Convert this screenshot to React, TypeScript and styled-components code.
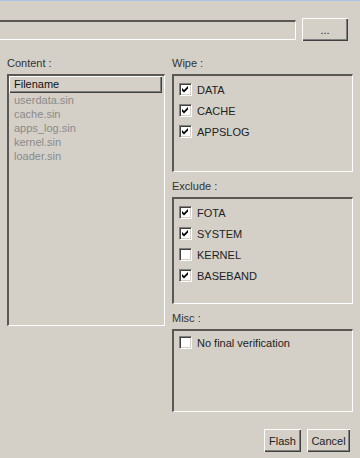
import React from "react";
import styled, { createGlobalStyle } from "styled-components";

const Global = createGlobalStyle`
  html, body { margin: 0; padding: 0; background: #d4d0c8; }
  body { font-family: "Liberation Sans", Arial, sans-serif; font-size: 11px; color: #222; }
`;

const Window = styled.div`
  width: 360px;
  height: 458px;
  background: #d4d0c8;
  border-top: 1px solid #a9c6ea;
  box-sizing: border-box;
  display: flex;
  flex-direction: column;
  position: relative;
  overflow: hidden;
`;

const TopRow = styled.div`
  display: flex;
  align-items: center;
  padding: 17px 12px 0 0;
  gap: 6px;
`;

const Field = styled.div`
  flex: 1;
  height: 20px;
  background: #d4d0c8;
  border-top: 2px solid #5a5855;
  border-bottom: 1px solid #fff;
  border-right: 1px solid #fff;
  box-sizing: border-box;
`;

const Button = styled.button<{ $w: number; $h: number }>`
  width: ${(p) => p.$w}px;
  height: ${(p) => p.$h}px;
  padding: 0;
  margin: 0;
  background: #d4d0c8;
  font-family: "Liberation Sans", Arial, sans-serif;
  font-size: 11px;
  color: #222;
  border: none;
  box-shadow: inset 1px 1px 0 #fff, inset -1px -1px 0 #404040, inset -2px -2px 0 #808080;
  display: flex;
  align-items: center;
  justify-content: center;
`;

const Main = styled.div`
  display: grid;
  grid-template-columns: 158px 181px;
  column-gap: 7px;
  padding: 16px 0 0 7px;
`;

const Column = styled.div`
  display: flex;
  flex-direction: column;
`;

const Label = styled.div<{ $top?: number }>`
  height: 12px;
  line-height: 12px;
  margin-top: ${(p) => p.$top ?? 0}px;
  margin-bottom: 5px;
  color: #333;
`;

const Sunken = styled.div<{ $h: number }>`
  height: ${(p) => p.$h}px;
  box-sizing: border-box;
  border-top: 2px solid #5a5855;
  border-left: 2px solid #5a5855;
  border-right: 1px solid #fff;
  border-bottom: 1px solid #fff;
  display: flex;
  flex-direction: column;
`;

const Header = styled.div`
  height: 17px;
  line-height: 17px;
  padding-left: 5px;
  color: #111;
  margin-right: 2px;
  box-shadow: inset 1px 1px 0 #fff, inset -1px -1px 0 #404040, inset -2px -2px 0 #808080;
`;

const Item = styled.div`
  height: 14px;
  line-height: 14px;
  padding-left: 5px;
  color: #8a8a8a;
`;

const Checks = styled.div<{ $pad?: number }>`
  display: flex;
  flex-direction: column;
  padding: ${(p) => p.$pad ?? 3}px 0 0 5px;
`;

const Row = styled.div`
  height: 21px;
  display: flex;
  align-items: center;
  gap: 5px;
  color: #222;
`;

const Box = styled.span`
  width: 13px;
  height: 13px;
  box-sizing: border-box;
  background: #fff;
  border-top: 1px solid #808080;
  border-left: 1px solid #808080;
  border-right: 1px solid #fff;
  border-bottom: 1px solid #fff;
  box-shadow: inset 1px 1px 0 #404040, inset -1px -1px 0 #d4d0c8;
  display: flex;
  align-items: center;
  justify-content: center;
`;

const Check = ({ on, label }: { on: boolean; label: string }) => (
  <Row>
    <Box>
      {on && (
        <svg width="7" height="7" viewBox="0 0 7 7">
          <path d="M0 2 L2 4 L6 0 L6 2.5 L2 6.5 L0 4.5 Z" fill="#000" />
        </svg>
      )}
    </Box>
    <span>{label}</span>
  </Row>
);

const Footer = styled.div`
  display: flex;
  justify-content: flex-end;
  gap: 6px;
  padding: 17px 10px 0 0;
`;

export default function App() {
  return (
    <Window>
      <Global />
      <TopRow>
        <Field />
        <Button $w={46} $h={23}>...</Button>
      </TopRow>
      <Main>
        <Column>
          <Label>Content :</Label>
          <Sunken $h={252}>
            <Header>Filename</Header>
            {["userdata.sin", "cache.sin", "apps_log.sin", "kernel.sin", "loader.sin"].map((f) => (
              <Item key={f}>{f}</Item>
            ))}
          </Sunken>
        </Column>
        <Column>
          <Label>Wipe :</Label>
          <Sunken $h={98}>
            <Checks>
              <Check on label="DATA" />
              <Check on label="CACHE" />
              <Check on label="APPSLOG" />
            </Checks>
          </Sunken>
          <Label $top={8}>Exclude :</Label>
          <Sunken $h={107}>
            <Checks>
              <Check on label="FOTA" />
              <Check on label="SYSTEM" />
              <Check on={false} label="KERNEL" />
              <Check on label="BASEBAND" />
            </Checks>
          </Sunken>
          <Label $top={8}>Misc :</Label>
          <Sunken $h={83}>
            <Checks $pad={1}>
              <Check on={false} label="No final verification" />
            </Checks>
          </Sunken>
        </Column>
      </Main>
      <Footer>
        <Button $w={37} $h={23}>Flash</Button>
        <Button $w={43} $h={23}>Cancel</Button>
      </Footer>
    </Window>
  );
}
